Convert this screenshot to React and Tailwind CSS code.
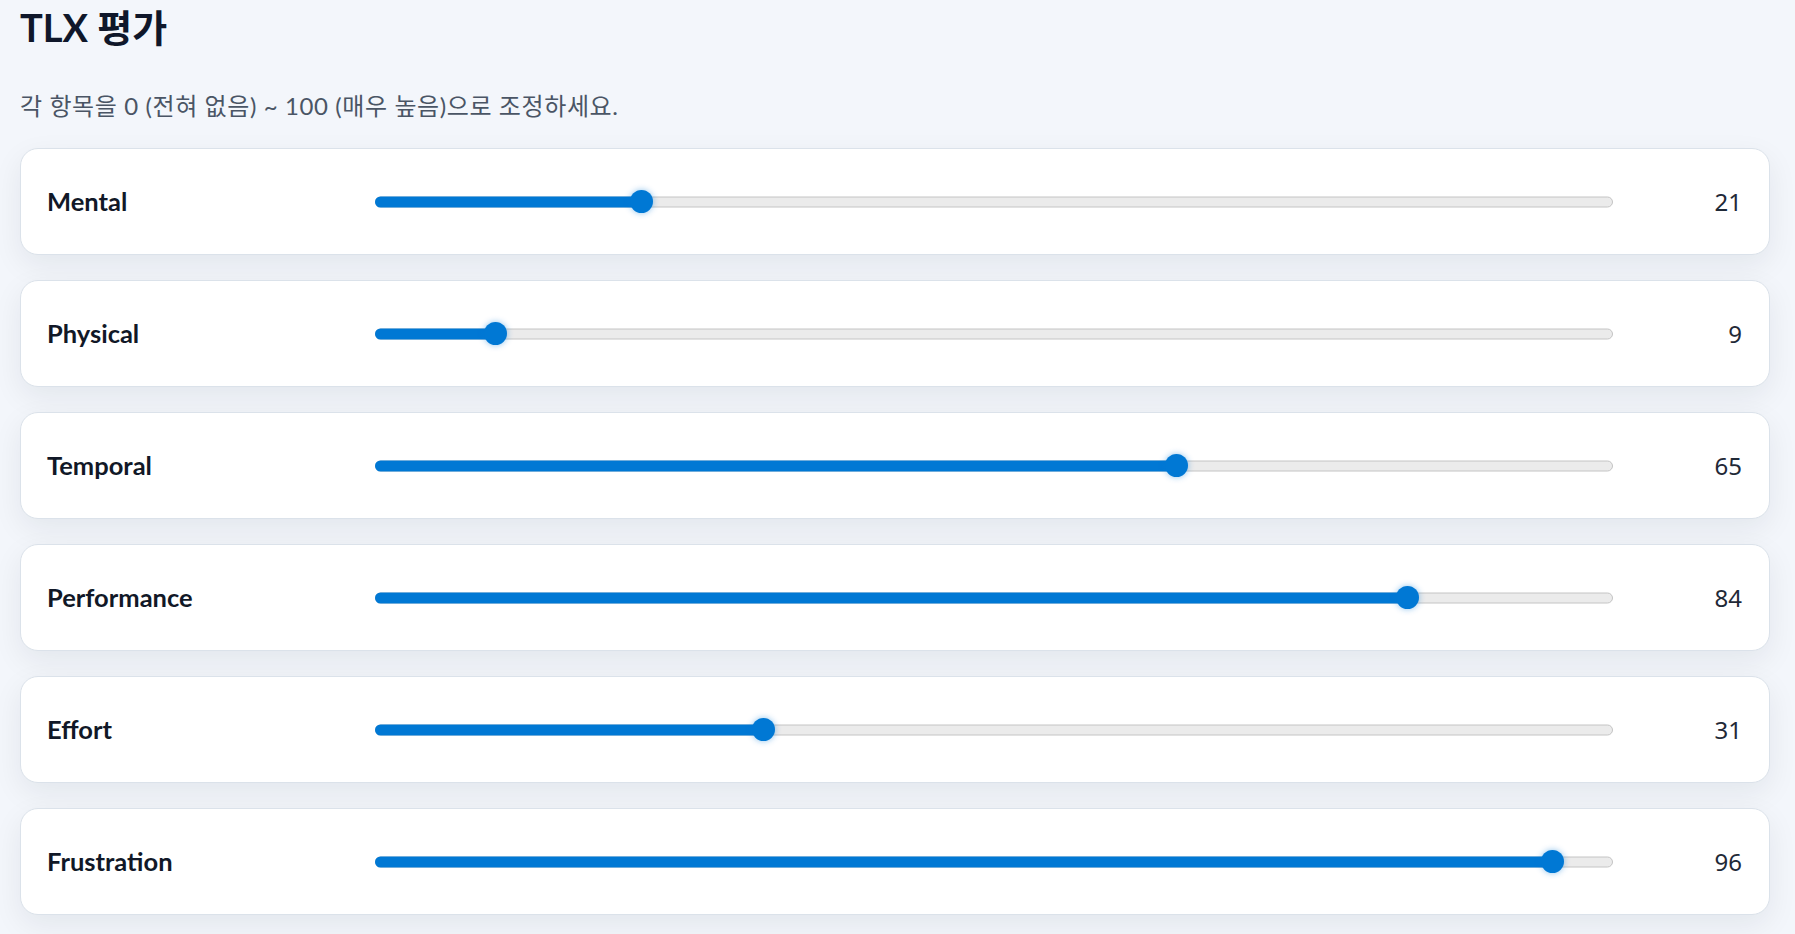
import React from 'react';

const items = [
  { name: 'Mental', value: 21 },
  { name: 'Physical', value: 9 },
  { name: 'Temporal', value: 65 },
  { name: 'Performance', value: 84 },
  { name: 'Effort', value: 31 },
  { name: 'Frustration', value: 96 },
];

// track + thumb drawn with divs so sizes match the screenshot
function Slider({ value }) {
  const f = value / 100;
  return (
    <div className="relative h-[23px]">
      <div className="absolute inset-x-0 top-1/2 -translate-y-1/2 h-[11px] rounded-full border border-[#c4c4c4] bg-[#ebebeb]" />
      <div
        className="absolute left-0 top-1/2 -translate-y-1/2 h-[11px] rounded-full bg-[#0078d4]"
        style={{ width: `calc(11.5px + ${f} * (100% - 23px))` }}
      />
      <div
        className="absolute top-0 h-[23px] w-[23px] rounded-full bg-[#0078d4] shadow-[0_0_6px_rgba(0,120,212,0.45)]"
        style={{ left: `calc(${f} * (100% - 23px))` }}
      />
    </div>
  );
}

export default function App() {
  return (
    <div
      className="min-h-screen bg-[#f3f6fb] pl-5 pr-[25px] pt-[5px] pb-10"
      style={{ fontFamily: 'Lato, "Noto Sans CJK KR", sans-serif' }}
    >
      <h1 className="text-[38px] leading-[44px] font-bold text-[#0f172a]">TLX 평가</h1>
      <p className="mt-[41px] text-[24px] leading-[32px] tracking-[0.6px] text-[#4a5565]">
        각 항목을 0 (전혀 없음) ~ 100 (매우 높음)으로 조정하세요.
      </p>

      <div className="mt-[26px] flex flex-col gap-[25px]">
        {items.map((item) => (
          <div
            key={item.name}
            className="h-[107px] grid grid-cols-[301px_1fr_102px] gap-[27px] items-center bg-white border border-[#dbe2ea] rounded-[18px] pl-[26px] pr-[27px] shadow-[0_10px_30px_rgba(15,23,42,0.07)]"
          >
            <span className="text-[25.5px] font-bold text-[#111827]">{item.name}</span>
            <Slider value={item.value} />
            <span
              className="text-right text-[24px] text-[#1f2937]"
              style={{ fontFamily: '"Noto Sans", sans-serif' }}
            >
              {item.value}
            </span>
          </div>
        ))}
      </div>
    </div>
  );
}
